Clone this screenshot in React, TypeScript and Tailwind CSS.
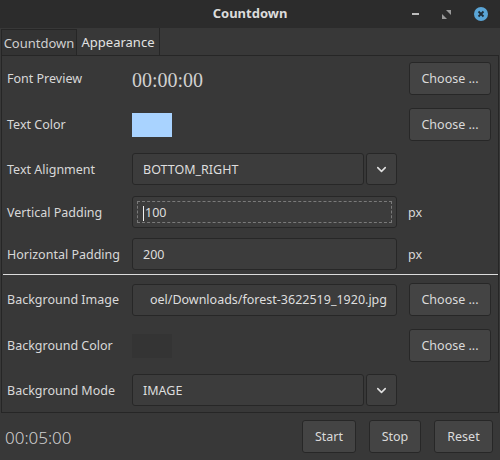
import { ChevronDown } from "lucide-react";

const font = { fontFamily: '"Noto Sans", "DejaVu Sans", sans-serif' };

function Btn({ label, w = "w-[82px]" }: { label: string; w?: string }) {
  return (
    <button className={`${w} h-[33px] rounded-[3px] border border-[#272727] bg-[#444444] pt-[2px] text-[12.5px] text-[#dadada]`}>
      {label}
    </button>
  );
}

function Combo({ value }: { value: string }) {
  return (
    <div className="flex w-[265px] gap-[2px]">
      <div className="flex h-[32px] flex-1 items-center rounded-[3px] border border-[#272727] bg-[#3c3c3c] px-[10px] pt-[2px] text-[12.5px] text-[#dedede]">
        {value}
      </div>
      <div className="flex h-[32px] w-[31px] items-center justify-center rounded-[3px] border border-[#272727] bg-[#3f3f3f]">
        <ChevronDown size={15} strokeWidth={2.5} className="text-[#e0e0e0]" />
      </div>
    </div>
  );
}

function Field({ value, focus }: { value: string; focus?: boolean }) {
  return (
    <div className="flex h-[32px] w-[265px] items-center rounded-[3px] border border-[#272727] bg-[#3c3c3c] p-[4px] text-[12.5px] text-[#dedede]">
      <div
        className={`flex h-full flex-1 items-center overflow-hidden whitespace-nowrap px-[5px] pt-[2px] ${
          focus ? "border border-dashed border-[#7a7a7a]" : "border border-transparent"
        }`}
      >
        {focus && <span className="mr-[1px] inline-block h-[15px] w-[1px] bg-[#f0f0f0]" />}
        {value}
      </div>
    </div>
  );
}

function Label({ text }: { text: string }) {
  return <div className="w-[125px] shrink-0 pt-[2px] text-[12.5px] text-[#d8d8d8]">{text}</div>;
}

export default function App() {
  return (
    <div className="flex h-[460px] w-[500px] flex-col overflow-hidden bg-[#383838]" style={font}>
      {/* title bar */}
      <div className="relative flex h-[28px] items-center justify-center bg-[#2c2c2c]">
        <span className="text-[13px] font-bold text-[#dcdcdc]">Countdown</span>
        <div className="absolute right-[12px] top-0 flex h-full items-center gap-[23px]">
          <div className="h-[2px] w-[7px] bg-[#bdbdbd]" />
          <svg width="9" height="9" viewBox="0 0 9 9">
            <path d="M4 0H9V5Z" fill="#9a9a9a" />
            <path d="M0 4V9H5Z" fill="#9a9a9a" />
          </svg>
          <div className="flex h-[14px] w-[14px] items-center justify-center rounded-full bg-[#5aa5d6]">
            <svg width="8" height="8" viewBox="0 0 8 8">
              <path d="M1.5 1.5L6.5 6.5M6.5 1.5L1.5 6.5" stroke="#1f2d38" strokeWidth="1.8" />
            </svg>
          </div>
        </div>
      </div>

      {/* tabs */}
      <div className="flex h-[27px] items-end pl-[1px]">
        <div className="flex h-[26px] w-[76px] items-center justify-center border border-b-0 border-[#262626] bg-[#333333] pt-[3px] text-[13px] text-[#cfcfcf]">
          Countdown
        </div>
        <div className="flex h-[27px] w-[83px] items-center justify-center border-r border-[#262626] pt-[3px] text-[13px] text-[#e2e2e2]">
          Appearance
        </div>
      </div>

      {/* panel */}
      <div className="mx-[1px] flex flex-col border border-[#262626] pb-[6px] pl-[5px] pt-[6px]">
        <div className="flex h-[33px] items-center">
          <Label text="Font Preview" />
          <div className="w-[265px] pt-[2px] text-[20px] text-[#d0d0d0]" style={{ fontFamily: '"Liberation Serif", serif' }}>
            00:00:00
          </div>
          <div className="ml-[12px]">
            <Btn label="Choose ..." />
          </div>
        </div>

        <div className="mt-[13px] flex h-[33px] items-center">
          <Label text="Text Color" />
          <div className="w-[265px]">
            <div className="h-[24px] w-[40px] bg-[#a9d3ff]" />
          </div>
          <div className="ml-[12px]">
            <Btn label="Choose ..." />
          </div>
        </div>

        <div className="mt-[12px] flex h-[32px] items-center">
          <Label text="Text Alignment" />
          <Combo value="BOTTOM_RIGHT" />
        </div>

        <div className="mt-[11px] flex h-[32px] items-center">
          <Label text="Vertical Padding" />
          <Field value="100" focus />
          <span className="ml-[11px] pt-[2px] text-[12.5px] text-[#d8d8d8]">px</span>
        </div>

        <div className="mt-[10px] flex h-[32px] items-center">
          <Label text="Horizontal Padding" />
          <Field value="200" />
          <span className="ml-[11px] pt-[2px] text-[12.5px] text-[#d8d8d8]">px</span>
        </div>

        <div className="-ml-[4px] mt-[4px] h-[1px] bg-[#dcdcdc]" />

        <div className="mt-[8px] flex h-[33px] items-center">
          <Label text="Background Image" />
          <div className="flex h-[32px] w-[265px] items-center justify-end overflow-hidden whitespace-nowrap rounded-[3px] border border-[#272727] bg-[#3c3c3c] px-[9px] pt-[2px] text-[12.5px] text-[#dedede]">
            oel/Downloads/forest-3622519_1920.jpg
          </div>
          <div className="ml-[12px]">
            <Btn label="Choose ..." />
          </div>
        </div>

        <div className="mt-[13px] flex h-[33px] items-center">
          <Label text="Background Color" />
          <div className="w-[265px]">
            <div className="h-[24px] w-[40px] bg-[#343434]" />
          </div>
          <div className="ml-[12px]">
            <Btn label="Choose ..." />
          </div>
        </div>

        <div className="mt-[12px] flex h-[32px] items-center">
          <Label text="Background Mode" />
          <Combo value="IMAGE" />
        </div>
      </div>

      {/* footer */}
      <div className="flex flex-1 items-center pl-[5px] pr-[7px]">
        <span className="pt-[2px] text-[17px] font-light text-[#cfcfcf]">00:05:00</span>
        <div className="ml-auto flex gap-[13px]">
          <Btn label="Start" w="w-[54px]" />
          <Btn label="Stop" w="w-[52px]" />
          <Btn label="Reset" w="w-[59px]" />
        </div>
      </div>
    </div>
  );
}
